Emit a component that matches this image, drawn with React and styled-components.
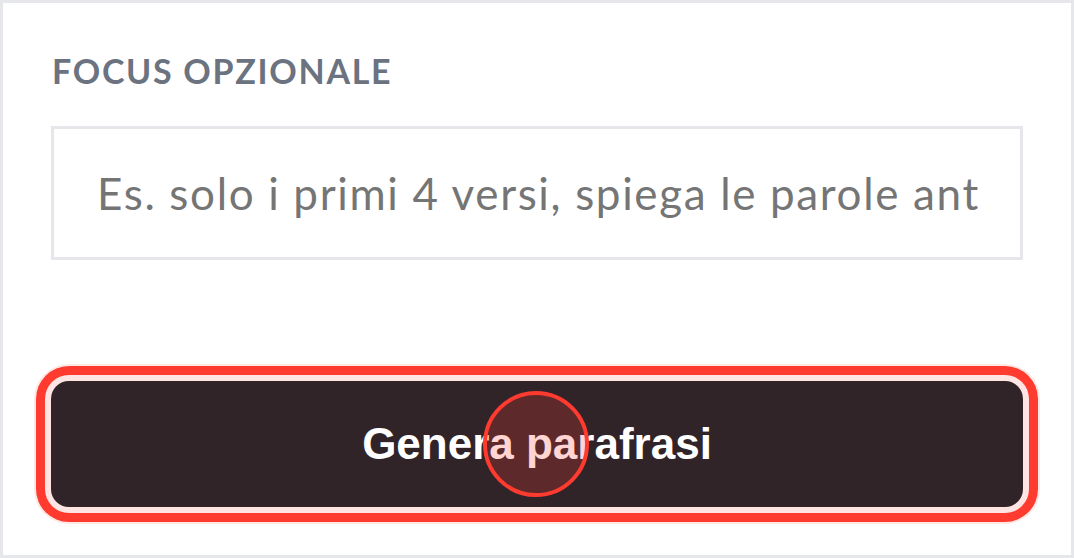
import { useState } from "react";
import styled, { createGlobalStyle } from "styled-components";

const GlobalStyle = createGlobalStyle`
  html, body {
    margin: 0;
    padding: 0;
    background: #ffffff;
  }
  * {
    box-sizing: border-box;
  }
`;

const Card = styled.div`
  width: 1074px;
  height: 558px;
  border: 3px solid #e5e7eb;
  background: #ffffff;
  padding: 47px 48px 0;
  display: flex;
  flex-direction: column;
  font-family: Lato, "Noto Sans", sans-serif;
`;

const Label = styled.label`
  display: block;
  font-size: 34px;
  line-height: 42px;
  font-weight: 700;
  letter-spacing: 0.05em;
  color: #6b7280;
  text-transform: uppercase;
  padding-left: 1px;
`;

const Field = styled.input`
  margin-top: 34px;
  width: 100%;
  height: 134px;
  border: 3px solid #e5e7eb;
  border-radius: 0;
  padding: 0 42px 0 43px;
  font-family: Lato, "Noto Sans", sans-serif;
  font-size: 44px;
  letter-spacing: 1.65px;
  color: #374151;
  background: #ffffff;
  outline: none;

  &::placeholder {
    color: #757575;
    opacity: 1;
  }
`;

const ButtonWrap = styled.div`
  position: relative;
  margin-top: 121px;
`;

const GenerateButton = styled.button`
  width: 100%;
  height: 126px;
  border: none;
  border-radius: 18px;
  background: #302428;
  color: #ffffff;
  font-family: "Liberation Sans", Arial, sans-serif;
  font-weight: 700;
  font-size: 44px;
  cursor: pointer;
  box-shadow: 0 0 0 6px #fee4e2, 0 0 0 15px #ff3b30, 0 0 0 17px #fde8e6;
`;

const ClickMark = styled.span`
  position: absolute;
  width: 106px;
  height: 106px;
  border-radius: 50%;
  border: 4px solid #ff3b30;
  background: rgba(255, 59, 48, 0.22);
  pointer-events: none;
  transform: translate(-50%, -50%);
`;

export default function App() {
  const [focus, setFocus] = useState("");

  return (
    <>
      <GlobalStyle />
      <Card>
        <Label htmlFor="focus">Focus opzionale</Label>
        <Field
          id="focus"
          type="text"
          value={focus}
          onChange={(e) => setFocus(e.target.value)}
          placeholder="Es. solo i primi 4 versi, spiega le parole antiche"
        />
        <ButtonWrap>
          <GenerateButton>Genera parafrasi</GenerateButton>
          <ClickMark style={{ left: 485, top: 63 }} />
        </ButtonWrap>
      </Card>
    </>
  );
}
